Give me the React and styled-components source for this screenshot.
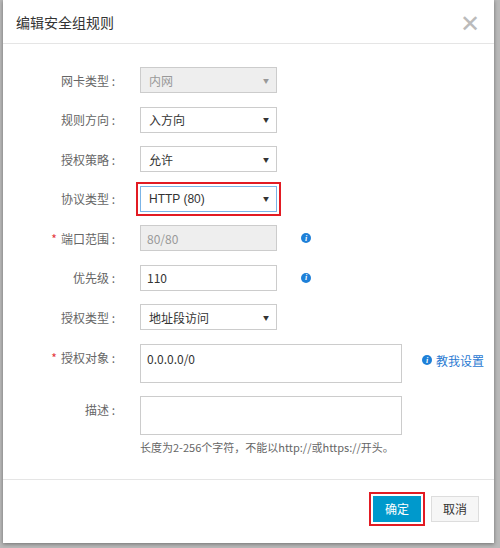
import React from "react";
import styled, { createGlobalStyle } from "styled-components";

const G = createGlobalStyle`
  html,body{margin:0;background:#b9b9b9;}
  body{font-family:"Noto Sans CJK SC","Liberation Sans",sans-serif;font-size:12px;color:#333;}
`;
const Page = styled.div`width:500px;height:548px;padding:0 6px 5px 3px;box-sizing:border-box;`;
const Dialog = styled.div`background:#fff;height:543px;display:flex;flex-direction:column;box-shadow:0 1px 4px rgba(0,0,0,.4);`;
const Header = styled.div`height:43px;border-bottom:1px solid #e5e5e5;display:flex;align-items:center;justify-content:space-between;padding:0 14px 0 13px;font-size:14px;color:#333;`;
const Close = styled.span`font-size:24px;color:#bbb;font-weight:200;line-height:1;`;
const Body = styled.div`flex:1;padding:23px 0 0;display:flex;flex-direction:column;`;
const Row = styled.div`display:flex;align-items:${p=>p.top?"flex-start":"center"};height:${p=>p.h||26}px;margin-bottom:${p=>p.mb??13.5}px;`;
const Label = styled.div`width:137px;text-align:right;color:#666;font-size:12px;padding-right:25px;box-sizing:border-box;${p=>p.top?"padding-top:5px;":""}`;
const Star = styled.span`color:#e4393c;margin-right:4px;`;
const Field = styled.div`width:${p=>p.w||137}px;height:${p=>p.h||26}px;box-sizing:border-box;border:1px solid ${p=>p.focus?"#7bb4e6":"#ccc"};background:${p=>p.dis?"#eee":"#fff"};color:${p=>p.dis?"#999":"#333"};display:flex;align-items:${p=>p.top?"flex-start":"center"};justify-content:space-between;padding:${p=>p.top?"5px":"0"} 7px 0 ${p=>p.pl||8}px;font-size:12px;`;
const Arrow = styled.span`font-size:6px;color:${p=>p.dis?"#999":"#333"};`;
const Red = styled.div`border:2px solid #e21b23;padding:2px;margin:-4px;`;
const Info = styled.span`width:10px;height:10px;border-radius:50%;background:#1e80d8;color:#fff;font:italic bold 8px "Liberation Serif",serif;display:inline-flex;align-items:center;justify-content:center;margin-left:${p=>p.ml??24}px;`;
const Help = styled.span`display:flex;align-items:center;color:#2a7ad2;margin-left:20px;padding-top:8px;gap:4px;`;
const Hint = styled.div`margin-left:137px;margin-top:4px;color:#666;font-size:11px;`;
const Footer = styled.div`height:57px;border-top:1px solid #e5e5e5;display:flex;justify-content:flex-end;align-items:center;gap:6px;padding:0 15px 6px 0;`;
const Btn = styled.button`width:48px;height:26px;border:1px solid ${p=>p.primary?"#0099cc":"#ddd"};background:${p=>p.primary?"#0099cc":"#f6f6f6"};color:${p=>p.primary?"#fff":"#333"};font:12px "Noto Sans CJK SC",sans-serif;`;

const Sel = ({children,dis,focus}) => <Field dis={dis} focus={focus}>{children}<Arrow dis={dis}>▼</Arrow></Field>;

export default function App(){
  return <Page><G/><Dialog>
    <Header>编辑安全组规则<Close>✕</Close></Header>
    <Body>
      <Row><Label>网卡类型 :</Label><Sel dis>内网</Sel></Row>
      <Row><Label>规则方向 :</Label><Sel>入方向</Sel></Row>
      <Row><Label>授权策略 :</Label><Sel>允许</Sel></Row>
      <Row><Label>协议类型 :</Label><Red><Sel focus><span style={{fontFamily:"Liberation Sans"}}>HTTP (80)</span></Sel></Red></Row>
      <Row><Label><Star>*</Star>端口范围 :</Label><Field dis pl={6}>80/80</Field><Info>i</Info></Row>
      <Row><Label>优先级 :</Label><Field pl={6}>110</Field><Info>i</Info></Row>
      <Row><Label>授权类型 :</Label><Sel>地址段访问</Sel></Row>
      <Row top h={39} mb={13}><Label top><Star>*</Star>授权对象 :</Label><Field top w={262} h={39} pl={6}>0.0.0.0/0</Field><Help><Info ml={0}>i</Info>教我设置</Help></Row>
      <Row top h={39} mb={0}><Label top>描述 :</Label><Field top w={262} h={39}></Field></Row>
      <Hint>长度为2-256个字符，不能以http://或https://开头。</Hint>
    </Body>
    <Footer><Red><Btn primary>确定</Btn></Red><Btn style={{marginLeft:4}}>取消</Btn></Footer>
  </Dialog></Page>;
}
